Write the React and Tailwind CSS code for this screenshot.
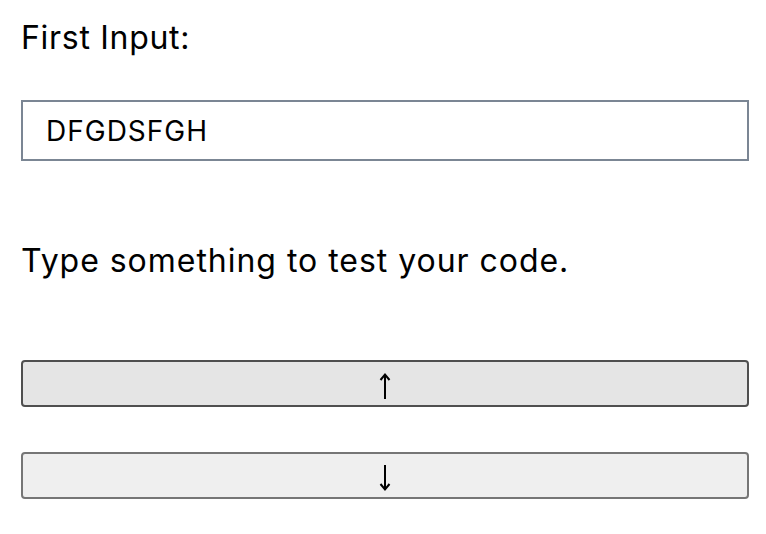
import React, { useState } from "react";

function Arrow({ down }) {
  return (
    <svg
      width="12"
      height="28"
      viewBox="0 0 12 28"
      fill="none"
      stroke="#000"
      strokeWidth="2"
      strokeLinecap="butt"
      strokeLinejoin="miter"
      className={down ? "mt-[5px] rotate-180" : "mt-[5px]"}
    >
      <path d="M6 3 V27" />
      <path d="M1.5 8 L6 2.5 L10.5 8" />
    </svg>
  );
}

export default function App() {
  const [value, setValue] = useState("DFGDSFGH");

  return (
    <div className="bg-white pl-[21px] pr-[17px] pt-[22px] text-black font-['Inter','Liberation_Sans',sans-serif]">
      <label htmlFor="first" className="block text-[32px] leading-[31px] tracking-[0.7px]">
        First Input:
      </label>

      <input
        id="first"
        value={value}
        onChange={(e) => setValue(e.target.value)}
        className="mt-[47px] block h-[61px] w-full border-2 border-[#7b8694] bg-white pl-[23px] text-[28px] tracking-[1px] outline-none font-['Inter','Liberation_Sans',sans-serif]"
      />

      <p className="mt-[84px] text-[32px] leading-[31px] tracking-[0.97px]">
        Type something to test your code.
      </p>

      <button className="mt-[84px] flex h-[47px] w-full items-center justify-center rounded-[4px] border-2 border-[#4f4f4f] bg-[#e5e5e5]">
        <Arrow />
      </button>

      <button className="mt-[45px] flex h-[47px] w-full items-center justify-center rounded-[4px] border-2 border-[#767676] bg-[#efefef]">
        <Arrow down />
      </button>
    </div>
  );
}
